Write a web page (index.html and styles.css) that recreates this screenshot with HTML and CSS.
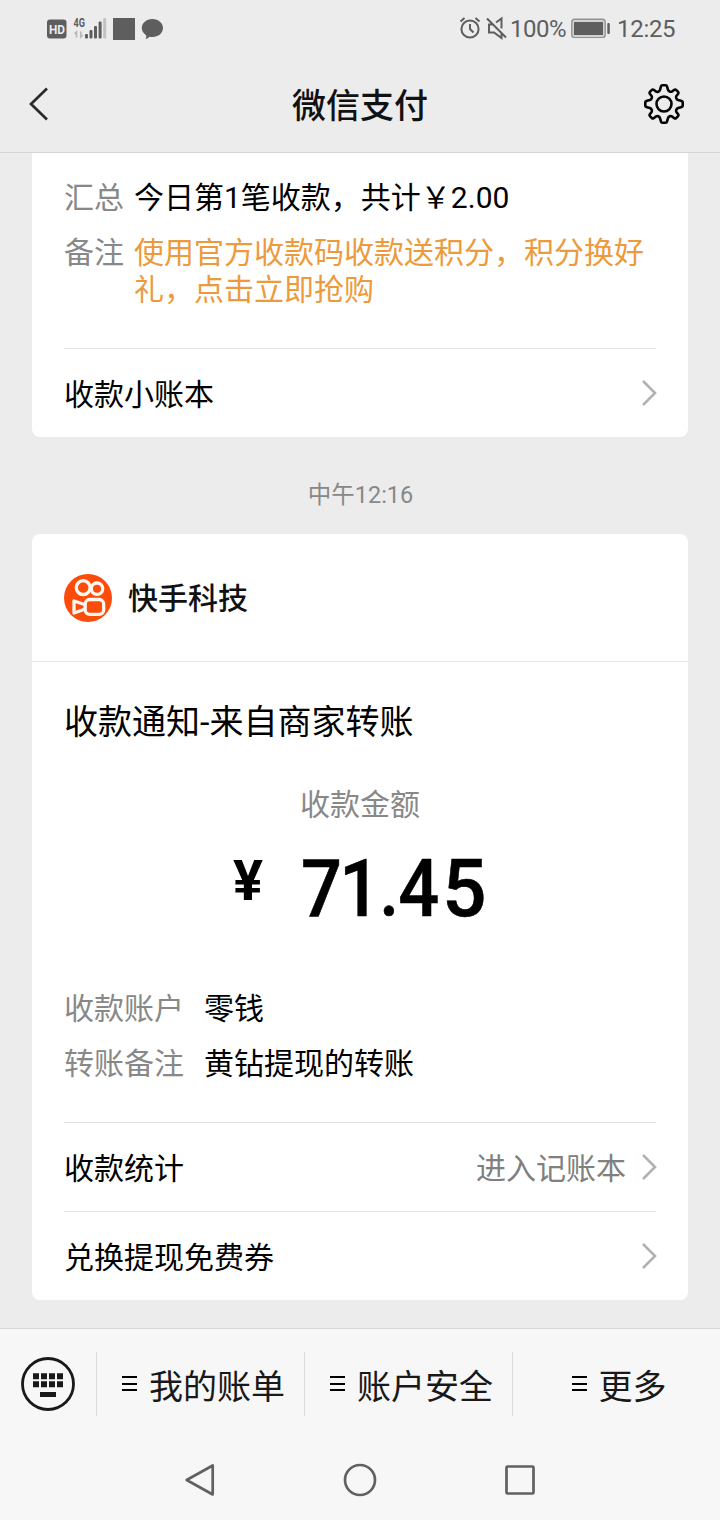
FILE: index.html
```html
<!DOCTYPE html>
<html lang="zh-CN">
<head>
<meta charset="utf-8">
<title>微信支付</title>
<link rel="stylesheet" href="styles.css">
</head>
<body>
<div class="status">
  <svg class="status-left" width="118" height="28" viewBox="46 15 118 28">
    <rect x="47" y="19.500" width="19.500" height="19" rx="3" fill="#5e5e5e"/>
    <text x="49" y="34" class="hd" textLength="16" lengthAdjust="spacingAndGlyphs">HD</text>
    <text x="73.500" y="27" class="net" textLength="11.500" lengthAdjust="spacingAndGlyphs">4G</text>
    <path d="M76.500 37.500V32l-2 2M80.800 31.500V37l2-2" fill="none" stroke="#b8b8b8" stroke-width="1.700"/>
    <g fill="#5e5e5e"><rect x="85" y="34" width="3" height="4.500" rx="1"/><rect x="89.500" y="30" width="3" height="8.500" rx="1"/><rect x="94" y="26" width="3" height="12.500" rx="1"/><rect x="98.600" y="21.500" width="3" height="17" rx="1"/></g>
    <rect x="103.200" y="18" width="3" height="20.500" rx="1" fill="#c2c2c2"/>
    <rect x="113" y="18" width="22" height="22" fill="#5e5e5e"/>
    <path d="M152.400 19c6 0 10.600 4 10.600 9s-4.600 9-10.600 9c-1 0-2-.1-2.900-.3-1 1.300-2.400 2-4.100 2.300.9-1 1.100-2.200.8-3.800-2.700-1.600-4.400-4.200-4.400-7.200 0-5 4.600-9 10.600-9z" fill="#5e5e5e"/>
  </svg>
  <div class="status-right">
    <svg width="50" height="24" viewBox="459 16 50 24" fill="none" stroke="#5e5e5e" stroke-width="2">
      <circle cx="470" cy="29" r="8.600"/><path d="M470 24v5l3.500 3.500M460.500 21.500l4-3.500M475.500 18l4 3.500"/>
      <path d="M487 18.500l19 19M493 24.500h-4v8h5l7.500 5.500v-5M496 22.500l5.500-4v10"/>
    </svg>
    <span class="pct">100%</span>
    <svg class="battery" width="40" height="20" viewBox="572 18 40 20"><rect x="572.800" y="19.300" width="33.400" height="18.400" rx="3" fill="#d2d2d2" stroke="#929292" stroke-width="1.400"/><rect x="575" y="22" width="29" height="13" fill="#5e5e5e"/><rect x="608.300" y="23" width="2.500" height="11" rx="1" fill="#5e5e5e"/></svg>
    <span class="clock">12:25</span>
  </div>
</div>
<header class="header">
  <svg width="24" height="38" viewBox="26 85 24 38"><path d="M47 88.500L31 104l16 15.500" fill="none" stroke="#2b2b2d" stroke-width="2.700"/></svg>
  <h1>微信支付</h1>
  <svg width="42" height="42" viewBox="-21 -21 42 42" fill="none" stroke="#050505" stroke-width="2.600" stroke-linejoin="round"><circle r="7.500"/><path d="M-1.700-18.700H1.700Q2.700-18.700 3-17.700L4-14.200Q4.600-12.600 6-12.200Q7.400-12.100 8-12.400L10.300-14.200Q11.300-14.900 12.100-14.100L14.100-12.100Q14.900-11.300 14.200-10.300L12.400-8Q11.800-7 12.300-5.700Q13-4.400 14.200-4L17.700-3Q18.700-2.700 18.700-1.700V1.700Q18.700 2.700 17.700 3L14.200 4Q13 4.400 12.300 5.700Q11.800 7 12.400 8L14.200 10.300Q14.900 11.300 14.100 12.100L12.100 14.100Q11.300 14.900 10.300 14.200L8 12.400Q7 11.900 5.700 12.300Q4.400 12.900 4 14.200L3 17.700Q2.700 18.700 1.700 18.700H-1.700Q-2.700 18.700-3 17.700L-4 14.200Q-4.400 12.900-5.700 12.300Q-7 11.900-8 12.400L-10.300 14.200Q-11.300 14.900-12.100 14.100L-14.100 12.100Q-14.900 11.300-14.200 10.300L-12.400 8Q-11.800 7-12.300 5.700Q-13 4.400-14.200 4L-17.700 3Q-18.700 2.700-18.700 1.700V-1.700Q-18.700-2.700-17.700-3L-14.200-4Q-13-4.400-12.300-5.700Q-11.800-7-12.400-8L-14.200-10.300Q-14.900-11.300-14.100-12.100L-12.100-14.100Q-11.300-14.900-10.300-14.200L-8-12.400Q-7-11.900-5.700-12.300Q-4.400-12.900-4-14.200L-3-17.700Q-2.700-18.700-1.700-18.700Z"/></svg>
</header>
<main class="chat">
  <section class="card card-top">
    <dl class="details">
      <dt>汇总</dt><dd>今日第1笔收款，共计￥2.00</dd>
      <dt>备注</dt><dd class="promo">使用官方收款码收款送积分，积分换好礼，点击立即抢购</dd>
    </dl>
    <div class="link"><span>收款小账本</span><svg class="chev" width="16" height="28" viewBox="0 0 16 28"><path d="M2 2l12 12L2 26"/></svg></div>
  </section>
  <time class="time">中午12:16</time>
  <section class="card card-pay">
    <div class="merchant">
      <svg width="48" height="48" viewBox="0 0 48 48"><circle cx="24" cy="24" r="24" fill="#fc4c0c"/><g fill="none" stroke="#fff8f0" stroke-width="3.300" stroke-linejoin="round"><circle cx="19.200" cy="13.600" r="6.900"/><circle cx="33" cy="14.700" r="5.700"/><rect x="21.200" y="25.500" width="18.500" height="14.800" rx="4.500"/><path d="M20.500 30.500L10 27v12l10.500-3.800"/></g></svg>
      <span>快手科技</span>
    </div>
    <div class="pay-body">
      <h2>收款通知-来自商家转账</h2>
      <div class="amount-label">收款金额</div>
      <div class="amount"><span class="yen">¥</span><span class="number"><span>7</span><span class="one">1</span><span class="dot">.</span><span class="four">4</span><span class="five">5</span></span></div>
      <dl class="details wide">
        <dt>收款账户</dt><dd>零钱</dd>
        <dt>转账备注</dt><dd>黄钻提现的转账</dd>
      </dl>
    </div>
    <div class="link"><span>收款统计</span><span class="hint">进入记账本</span><svg class="chev" width="16" height="28" viewBox="0 0 16 28"><path d="M2 2l12 12L2 26"/></svg></div>
    <div class="link"><span>兑换提现免费券</span><svg class="chev" width="16" height="28" viewBox="0 0 16 28"><path d="M2 2l12 12L2 26"/></svg></div>
  </section>
</main>
<footer class="menu">
  <div class="keyboard"><svg width="54" height="54" viewBox="0 0 54 54"><circle cx="27" cy="27" r="25.500" fill="none" stroke="#191919" stroke-width="2.800"/><g fill="#191919"><path d="M12 16.200h6v6h-6zM20 16.200h6v6h-6zM28 16.200h6v6h-6zM36 16.200h6v6h-6zM12 24.200h6v6h-6zM20 24.200h6v6h-6zM28 24.200h6v6h-6zM36 24.200h6v6h-6zM19 35h16v5H19z"/></g></svg></div>
  <div class="item"><i class="bars"></i><span>我的账单</span></div>
  <div class="item"><i class="bars"></i><span>账户安全</span></div>
  <div class="item last"><i class="bars"></i><span>更多</span></div>
</footer>
<nav class="nav">
  <svg width="36" height="36" viewBox="0 0 36 36"><path d="M30.700 3.500v29L4.700 18z"/></svg>
  <svg width="36" height="36" viewBox="0 0 36 36"><circle cx="18" cy="18" r="15"/></svg>
  <svg width="36" height="36" viewBox="0 0 36 36"><rect x="4.500" y="4.500" width="27" height="27" rx="1"/></svg>
</nav>
</body>
</html>
```
FILE: styles.css
```css
* { box-sizing: border-box; }
body, h1, h2, dl, dd { margin: 0; }
body { width: 720px; height: 1520px; overflow: hidden; background: #ececec; color: #000; font: 30px/38px Roboto, "Noto Sans CJK SC", sans-serif; }
svg { display: block; flex: none; }
.status { height: 58px; display: flex; justify-content: space-between; padding: 15px 43px 0 46px; color: #5e5e5e; font-size: 24px; line-height: 28px; }
.hd { font: 700 13.500px Roboto, sans-serif; fill: #ececec; }
.net { font: 700 12.500px Roboto, sans-serif; fill: #5e5e5e; }
.status-right { display: flex; margin-right: -1px; }
.status-right > svg { margin-top: 1px; }
.pct { width: 61px; margin-left: 1px; letter-spacing: -.5px; }
.status-right .battery { margin: 3px 6px 0 0; }
.clock { width: 61px; letter-spacing: -.3px; }
.header { height: 95px; display: flex; align-items: center; justify-content: space-between; padding: 0 35px 3px 26px; border-bottom: 1px solid #d5d5d5; }
h1 { font-size: 34px; line-height: 44px; font-weight: 500; color: #111; padding: 4px 0 0 27px; }
.chat { height: 1175px; padding: 0 32px; }
.card { background: #fff; border-radius: 8px; }
.card-top { height: 284px; border-radius: 0 0 8px 8px; padding-top: 26px; }
.details { display: grid; grid-template-columns: 70px 1fr; row-gap: 18px; padding: 0 32px; line-height: 37px; }
.details.wide { grid-template-columns: 140px 1fr; }
dt { color: #888; }
.promo { color: #ec9a3c; margin-right: -10px; }
.link { height: 89px; margin: 0 32px; border-top: 1px solid #e2e2e2; display: flex; align-items: center; }
.link span, .merchant span { padding-top: 3px; }
.card-top .link { margin-top: 40px; }
.chev { margin: 0 -1px 0 auto; fill: none; stroke: #b2b2b2; stroke-width: 2.600; }
.hint { margin-left: auto; color: #808080; }
.hint + .chev { margin-left: 15px; }
.time { display: block; height: 97px; padding: 39px 0 0 1px; text-align: center; font-size: 23.5px; color: #888; }
.merchant { height: 128px; padding-left: 32px; display: flex; align-items: center; gap: 16px; border-bottom: 1px solid #e5e5e5; font-weight: 500; color: #111; }
.pay-body { height: 460px; padding-top: 37px; }
h2 { padding-left: 32px; font-size: 34px; line-height: 46px; font-weight: 400; }
.amount-label { margin-top: 41px; color: #888; text-align: center; line-height: 38px; }
.amount { height: 116px; margin-top: 15px; padding-left: 200px; display: flex; align-items: flex-start; font-weight: 700; }
.yen { width: 69px; padding-left: 1px; font-size: 56px; line-height: 85px; }
.number { display: flex; font-size: 80px; line-height: 100px; font-weight: 500; transform: scaleX(.9); transform-origin: left; -webkit-text-stroke: .6px #000; }
.one { margin-left: -3px; }
.dot { margin-left: -1px; }
.four { margin-left: -1px; }
.five { margin-left: 3px; transform: scaleX(1.08); transform-origin: left; }
.wide { margin-top: 35px; }
.menu { height: 112px; background: #f7f7f7; border-top: 1px solid #d9d9d9; display: flex; align-items: center; padding-bottom: 2px; font-size: 34px; line-height: 64px; color: #191919; }
.keyboard { width: 96px; padding-left: 21px; }
.item { width: 208px; height: 64px; border-left: 1px solid #dcdcdc; display: flex; align-items: center; justify-content: center; gap: 12px; padding-left: 6px; }
.item span { padding-top: 6px; }
.item.last { padding-left: 5px; }
.bars { width: 15px; height: 15px; border-top: 2px solid #000; border-bottom: 2px solid #000; background: linear-gradient(#000, #000) center / 100% 2px no-repeat; }
.nav { height: 80px; background: #f7f7f7; display: flex; justify-content: center; align-items: center; gap: 124px; }
.nav svg { fill: none; stroke: #616161; stroke-width: 2.700; stroke-linejoin: round; }
```
